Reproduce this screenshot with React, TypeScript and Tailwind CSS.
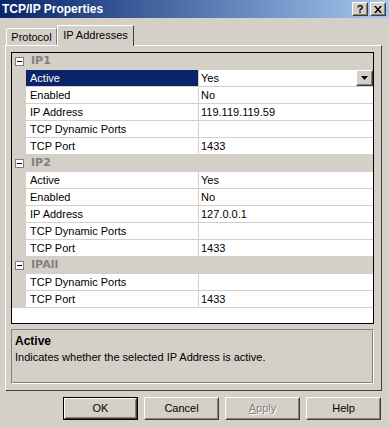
import React from 'react';

type Row = { name: string; value: string; selected?: boolean };
type Group = { title: string; rows: Row[] };

const groups: Group[] = [
  {
    title: 'IP1',
    rows: [
      { name: 'Active', value: 'Yes', selected: true },
      { name: 'Enabled', value: 'No' },
      { name: 'IP Address', value: '119.119.119.59' },
      { name: 'TCP Dynamic Ports', value: '' },
      { name: 'TCP Port', value: '1433' },
    ],
  },
  {
    title: 'IP2',
    rows: [
      { name: 'Active', value: 'Yes' },
      { name: 'Enabled', value: 'No' },
      { name: 'IP Address', value: '127.0.0.1' },
      { name: 'TCP Dynamic Ports', value: '' },
      { name: 'TCP Port', value: '1433' },
    ],
  },
  {
    title: 'IPAll',
    rows: [
      { name: 'TCP Dynamic Ports', value: '' },
      { name: 'TCP Port', value: '1433' },
    ],
  },
];

function Raised({ className = '', children }: { className?: string; children?: React.ReactNode }) {
  return (
    <div className={`border border-t-white border-l-white border-r-[#404040] border-b-[#404040] ${className}`}>
      <div className="flex h-full w-full items-center justify-center border border-t-[#d4d0c8] border-l-[#d4d0c8] border-r-[#808080] border-b-[#808080] bg-[#d4d0c8]">
        {children}
      </div>
    </div>
  );
}

function Minus() {
  return (
    <div className="flex h-[9px] w-[9px] items-center justify-center border border-[#808080] bg-white">
      <div className="h-px w-[5px] bg-black" />
    </div>
  );
}

function Button({ label, isDefault = false, disabled = false }: { label: React.ReactNode; isDefault?: boolean; disabled?: boolean }) {
  const inner = (
    <Raised className="h-full w-full">
      <span className={disabled ? 'text-[#808080] [text-shadow:1px_1px_0_#fff]' : 'text-black'}>{label}</span>
    </Raised>
  );
  return isDefault ? (
    <div className="h-[23px] w-[75px] border border-black">{inner}</div>
  ) : (
    <div className="h-[23px] w-[75px]">{inner}</div>
  );
}

export default function App() {
  return (
    <div className="flex h-[428px] w-[389px] flex-col overflow-hidden bg-[#d4d0c8] text-[11px] text-black [font-family:'Liberation_Sans',Arial,sans-serif]">
      {/* Title bar */}
      <div className="flex h-[18px] shrink-0 items-center justify-between bg-gradient-to-r from-[#0a246a] to-[#a6caf0] pl-[2px] pr-[3px]">
        <span className="text-[12px] font-bold text-white">TCP/IP Properties</span>
        <div className="flex gap-[2px]">
          <Raised className="h-[14px] w-[16px]">
            <span className="text-[11px] font-bold leading-none">?</span>
          </Raised>
          <Raised className="h-[14px] w-[16px]">
            <svg width="8" height="7" viewBox="0 0 8 7">
              <path d="M0 0h2l2 2.5L6 0h2L5 3.5 8 7H6L4 4.5 2 7H0l3-3.5z" fill="#000" />
            </svg>
          </Raised>
        </div>
      </div>

      {/* Tabs */}
      <div className="mt-[7px] flex h-[20px] shrink-0 items-end pl-[6px]">
        <div className="flex h-[17px] w-[51px] items-center justify-center rounded-tl-[2px] border-l border-t border-white border-r border-r-[#808080]">
          Protocol
        </div>
        <div className="relative z-10 -mb-px flex h-[21px] w-[77px] items-center justify-center border-l border-t border-white border-r border-r-[#404040] bg-[#d4d0c8] pb-[2px]">
          IP Addresses
        </div>
      </div>

      {/* Panel */}
      <div className="mx-[5px] flex h-[346px] w-[377px] shrink-0 flex-col border border-t-white border-l-white border-r-[#404040] border-b-[#404040] px-[5px] pt-[6px]">
        {/* Property grid */}
        <div className="h-[272px] w-[363px] border border-black bg-white">
          {groups.map((g) => (
            <div key={g.title}>
              <div className="flex h-[17px] items-center bg-[#d4d0c8]">
                <div className="flex w-[14px] justify-center pl-[1px]">
                  <Minus />
                </div>
                <span className="pl-[5px] font-bold text-[#808080] [font-family:'DejaVu_Sans',sans-serif] text-[11px]">{g.title}</span>
              </div>
              {g.rows.map((r) => (
                <div key={g.title + r.name} className="flex h-[17px]">
                  <div className="w-[14px] bg-[#d4d0c8]" />
                  <div
                    className={`flex w-[173px] items-center border-b border-r border-[#d4d0c8] pl-[4px] ${
                      r.selected ? 'bg-[#0a246a] text-white' : ''
                    }`}
                  >
                    {r.name}
                  </div>
                  <div className="flex flex-1 items-center justify-between border-b border-[#d4d0c8] pl-[2px]">
                    <span>{r.value}</span>
                    {r.selected && (
                      <Raised className="h-[16px] w-[17px]">
                        <svg width="7" height="4" viewBox="0 0 7 4">
                          <path d="M0 0h7L3.5 4z" fill="#000" />
                        </svg>
                      </Raised>
                    )}
                  </div>
                </div>
              ))}
            </div>
          ))}
        </div>

        {/* Description */}
        <div className="mt-[5px] h-[55px] w-[363px] border border-t-[#808080] border-l-[#808080] border-r-white border-b-white">
          <div className="h-full border border-t-[#d4d0c8] border-l-[#d4d0c8] border-r-[#808080] border-b-[#808080] px-[2px] pt-[3px]">
            <div className="font-bold text-[12px] leading-[14px]">Active</div>
            <div className="mt-[3px] leading-[13px]">Indicates whether the selected IP Address is active.</div>
          </div>
        </div>
      </div>

      {/* Buttons */}
      <div className="mt-[6px] flex justify-end gap-[6px] pr-[8px]">
        <Button label="OK" isDefault />
        <Button label="Cancel" />
        <Button label={<><span className="underline">A</span>pply</>} disabled />
        <Button label="Help" />
      </div>
    </div>
  );
}
